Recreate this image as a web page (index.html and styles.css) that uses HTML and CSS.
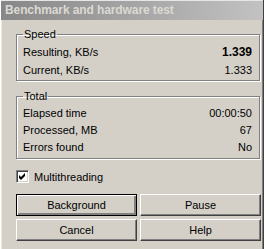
FILE: index.html
```html
<!DOCTYPE html>
<html lang="en">
<head>
<meta charset="UTF-8">
<title>Benchmark and hardware test</title>
<link rel="stylesheet" href="styles.css">
</head>
<body>
<div class="window">
    <div class="titlebar">Benchmark and hardware test</div>
    <div class="content">
        <fieldset class="group speed">
            <legend>Speed</legend>
            <div class="row"><span>Resulting, KB/s</span><span class="bold">1.339</span></div>
            <div class="row"><span>Current, KB/s</span><span>1.333</span></div>
        </fieldset>
        <fieldset class="group total">
            <legend>Total</legend>
            <div class="row"><span>Elapsed time</span><span>00:00:50</span></div>
            <div class="row"><span>Processed, MB</span><span>67</span></div>
            <div class="row"><span>Errors found</span><span>No</span></div>
        </fieldset>
        <label class="check">
            <span class="box">
                <svg width="7" height="7" viewBox="0 0 7 7"><path d="M0 2 L2 4 L6 0 L6 3 L2 7 L0 5 Z" fill="#000"/></svg>
            </span>
            Multithreading
        </label>
        <div class="buttons">
            <button class="default">Background</button>
            <button>Pause</button>
            <button>Cancel</button>
            <button>Help</button>
        </div>
    </div>
</div>
</body>
</html>
```
FILE: styles.css
```css
body {
    margin: 0;
    background: #fff;
    font-family: "Liberation Sans", Arial, sans-serif;
    font-size: 11px;
    color: #000;
}

.window {
    width: 262px;
    height: 249px;
    background: #d4d0c8;
    border-left: 1px solid #fff;
    border-right: 1px solid #404040;
    box-shadow: inset 1px 0 0 #eeeae2, inset -1px 0 0 #808080;
}

.titlebar {
    height: 19px;
    line-height: 19px;
    padding-left: 4px;
    background: linear-gradient(to right, #878787, #c2c2c2);
    color: #dcd9d3;
    font-weight: bold;
    font-size: 12px;
    letter-spacing: -0.1px;
    border-top: 1px solid #e6e6e6;
}

.content {
    padding: 8px 5px 0 15px;
}

.group {
    margin: 0;
    padding: 2px 7px 1px 6px;
    border: 1px solid #808080;
    box-shadow: 1px 1px 0 #fff, inset 1px 1px 0 #fff;
    width: 229px;
}

.group legend {
    padding: 0 1px;
    margin-left: 0;
    line-height: 13px;
}

.speed .row {
    height: 18px;
    line-height: 18px;
}

.total {
    margin-top: 9px;
    padding-bottom: 2px;
}

.total .row {
    height: 17px;
    line-height: 17px;
}

.row {
    display: flex;
    justify-content: space-between;
}

.bold {
    font-weight: bold;
    font-size: 12px;
}

.check {
    display: flex;
    align-items: center;
    height: 13px;
    margin-top: 11px;
    gap: 5px;
}

.check .box {
    width: 11px;
    height: 11px;
    background: #fff;
    border-top: 1px solid #808080;
    border-left: 1px solid #808080;
    border-right: 1px solid #fff;
    border-bottom: 1px solid #fff;
    box-shadow: inset 1px 1px 0 #404040, inset -1px -1px 0 #d4d0c8;
    display: flex;
    align-items: center;
    justify-content: center;
}

.buttons {
    display: grid;
    grid-template-columns: 121px 121px;
    gap: 3px 3px;
    margin-top: 11px;
}

.buttons button {
    height: 22px;
    padding: 0;
    background: #d4d0c8;
    font-family: "Liberation Sans", Arial, sans-serif;
    font-size: 11px;
    color: #000;
    border: 1px solid;
    border-color: #fff #404040 #404040 #fff;
    box-shadow: inset -1px -1px 0 #808080;
}

.buttons button.default {
    border: 1px solid #000;
    box-shadow: inset 1px 1px 0 #fff, inset -2px -2px 0 #808080;
}
```
